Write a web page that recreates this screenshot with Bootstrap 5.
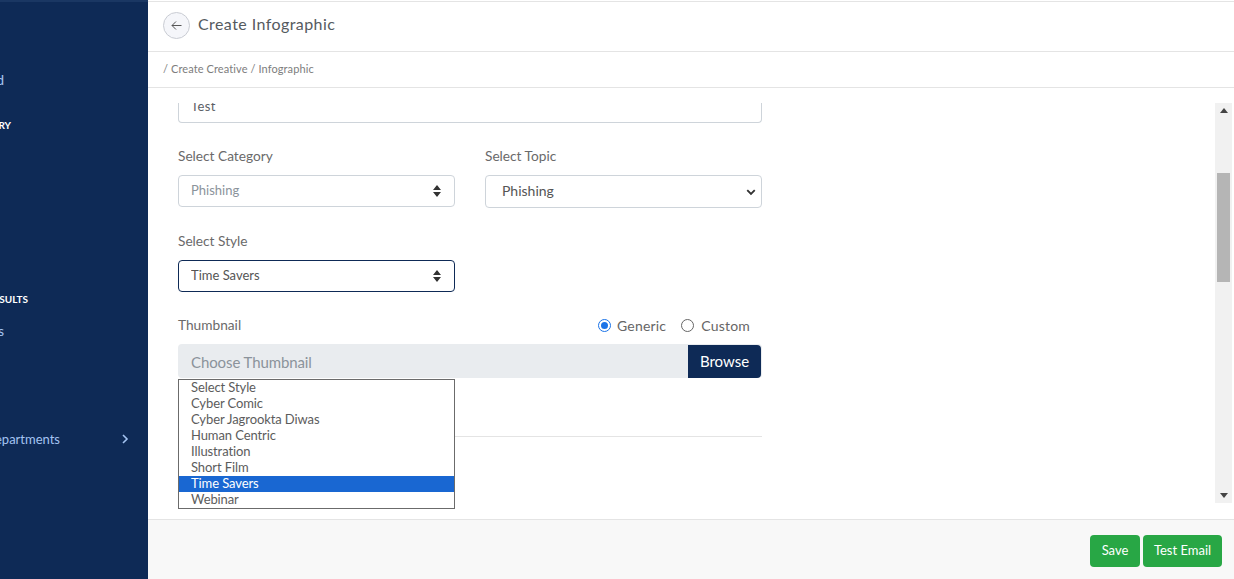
<!DOCTYPE html>
<html lang="en">
<head>
<meta charset="utf-8">
<title>Create Infographic</title>
<link href="https://cdn.jsdelivr.net/npm/bootstrap@5.3.0/dist/css/bootstrap.min.css" rel="stylesheet">
<style>
html,body{height:579px;overflow:hidden}
body{font-family:Lato,"Noto Sans",sans-serif;color:#5b6066;background:#fff;font-size:14px}
.app-shell{width:1234px;height:579px}
.side-panel{width:148px;background:#0e2a56;border-top:2px solid #1a3763;overflow:hidden;flex:none}
.side-row{display:flex;justify-content:flex-end;white-space:nowrap;color:#a4c4f2;font-size:14px;line-height:20px}
.side-head{color:#fff;font-weight:700;font-size:10px;line-height:14px}
.r-dash{width:4px;margin-top:68px}
.r-lib{width:11px;margin-top:28px}
.r-res{width:28px;margin-top:160px}
.r-resu{width:4px;margin-top:15px}
.r-dept{width:60px;margin-top:88px;font-size:13px}
.chev{flex:none;margin-left:60px;margin-top:88px}
.main-panel{min-width:0;position:relative;padding-top:1px}
.top-head{height:51px;border-top:1px solid #e4e4e4;border-bottom:1px solid #e4e4e4;padding:0 15px 2px}
.back-ring{width:27px;height:27px;border:1px solid #c9ccd3;border-radius:50%;background:#f5f6fa;flex:none}
.page-title{font-size:16px;font-weight:400;line-height:20px;color:#555a60;margin:0 0 3px 8px;letter-spacing:.43px}
.crumbs{height:36px;border-bottom:1px solid #e4e4e4;padding:0 15px;font-size:11px;color:#7d7d7d;letter-spacing:.1px}
.work-area{height:431px;padding:15px 2px 16px 0}
.form-clip{overflow:hidden;min-width:0;padding:0 15px 0 30px}
.form-box{width:584px;margin-top:-5px}
.fld{height:25px;border:1px solid #ced4da;border-top:0;border-radius:0 0 4px 4px;padding:1px 12px 0;color:#5b6066;font-size:13px;line-height:14px;letter-spacing:.4px}
.lbl{font-size:13.7px;color:#6a6a6a;line-height:18px;margin-bottom:10px}
.pick{height:32px;padding:0 12px 1px;font-size:13px;color:#555;border-color:#ced4da;border-radius:4px;background-size:10px 14px;background-position:right 12px center;background-repeat:no-repeat;background-image:url("data:image/svg+xml,%3csvg xmlns='http://www.w3.org/2000/svg' viewBox='0 0 10 14'%3e%3cpath fill='%23333' d='M5 1l4 5H1zM5 13L1 8h8z'/%3e%3c/svg%3e");box-shadow:none!important}
.pick-muted{color:#8b939b;background-color:#fff}
.pick-on{border-color:#0e2a56;color:#555}
.pick-topic{height:33px;font-size:14px;padding:0 12px 2px 16px;color:#555;background-size:12px 10px;background-position:right 4px center;background-image:url("data:image/svg+xml,%3csvg xmlns='http://www.w3.org/2000/svg' viewBox='0 0 16 16'%3e%3cpath fill='none' stroke='%23333' stroke-width='3' d='M2 5l6 6 6-6'/%3e%3c/svg%3e")}
.gap-cols{gap:30px}
.gap-cols>div{width:277px}
.mt-a{margin-top:24px}
.mt-b{margin-top:24px}
.thumb-top{margin-top:23px;height:20px}
.radio-txt{font-size:14px;color:#666;letter-spacing:.2px}
.rd{width:13px;height:13px;margin:0 6px 0 0;border:1px solid #666;background:#fff;border-radius:50%;flex:none}
.rd-c{margin-right:7px}
.gen-txt{margin-right:15px}
.rd-on{border:1px solid #1a73e8;padding:2px;background:#1a73e8;background-clip:content-box}
.thumb-group{height:34px;margin-top:9px;border-radius:4px;background:#e9ecef}
.thumb-ph{font-size:15px;color:#8b939b;padding:2px 0 0 13px;flex:1;letter-spacing:-.1px}
.browse-btn{width:73px;height:33px;background:#0e2a56;color:#fff;font-size:15px;border-radius:0 4px 4px 0;border:0;padding:0;margin-right:1px}
.rule-line{height:1px;background:#e4e4e4;margin-top:58px}
.fake-bar{width:17px;background:#f1f1f1;flex:none;height:400px}
.bar-cap{height:15px}
.bar-thumb{height:109px;width:13px;background:#b5b5b5;margin:55px auto 0}
.bar-rest{flex:1}
.tri-up{width:0;height:0;border:4px solid transparent;border-top:0;border-bottom:5px solid #444}
.tri-dn{width:0;height:0;border:4px solid transparent;border-bottom:0;border-top:5px solid #444}
.foot-bar{height:60px;background:#f8f8f8;border-top:1px solid #e4e4e4;padding:15px 12px 12px 0;gap:3px}
.go-btn{height:32px;background:#28a745;color:#fff;font-size:13px;border:0;border-radius:4px;padding:0}
.w-save{width:50px}.w-test{width:79px}
.drop-list{position:absolute;left:30px;top:379px;width:277px;height:130px;background:#fff;border:1px solid #6b6b6b;z-index:5;font-size:13px;color:#5c5c5c;letter-spacing:-.1px}
.drop-item{height:16px;line-height:14px;padding-left:12px}
.drop-sel{background:#1967d2;color:#fff}
</style>
</head>
<body>
<div class="app-shell d-flex">
  <aside class="side-panel">
    <div class="side-row r-dash">Dashboard</div>
    <div class="side-row side-head r-lib">LIBRARY</div>
    <div class="side-row side-head r-res">RESULTS</div>
    <div class="side-row r-resu">Results</div>
    <div class="d-flex align-items-center">
      <div class="side-row r-dept">Departments</div>
      <svg class="chev" width="10" height="12" viewBox="0 0 10 12"><path d="M3 2l4 4-4 4" fill="none" stroke="#a4c4f2" stroke-width="1.6"/></svg>
    </div>
  </aside>
  <main class="main-panel flex-grow-1 d-flex flex-column">
    <header class="top-head d-flex align-items-center">
      <div class="back-ring d-flex align-items-center justify-content-center">
        <svg width="13" height="13" viewBox="0 0 13 13"><path d="M11.5 6.5H2M6 2.5l-4 4 4 4" fill="none" stroke="#555" stroke-width="1"/></svg>
      </div>
      <h1 class="page-title">Create Infographic</h1>
    </header>
    <div class="crumbs d-flex align-items-center">/ Create Creative / Infographic</div>
    <div class="work-area d-flex">
      <div class="form-clip flex-grow-1">
        <div class="form-box">
          <div class="fld">Test</div>
          <div class="d-flex gap-cols mt-a">
            <div>
              <div class="lbl">Select Category</div>
              <select class="form-select pick pick-muted"><option>Phishing</option></select>
            </div>
            <div>
              <div class="lbl">Select Topic</div>
              <select class="form-select pick pick-topic"><option>Phishing</option></select>
            </div>
          </div>
          <div class="mt-b">
            <div class="gap-cols d-flex"><div>
              <div class="lbl">Select Style</div>
              <select class="form-select pick pick-on"><option>Time Savers</option></select>
            </div></div>
          </div>
          <div class="thumb-top d-flex justify-content-between align-items-center">
            <div class="lbl mb-0">Thumbnail</div>
            <div class="d-flex align-items-center radio-txt me-2 pe-1">
              <span class="rd rd-on"></span><span class="gen-txt">Generic</span>
              <span class="rd rd-c"></span><span>Custom</span>
            </div>
          </div>
          <div class="thumb-group d-flex align-items-center">
            <div class="thumb-ph">Choose Thumbnail</div>
            <button class="browse-btn" type="button">Browse</button>
          </div>
          <div class="rule-line"></div>
        </div>
      </div>
      <div class="fake-bar d-flex flex-column">
        <div class="bar-cap d-flex align-items-center justify-content-center"><span class="tri-up"></span></div>
        <div class="bar-thumb"></div>
        <div class="bar-rest"></div>
        <div class="bar-cap d-flex align-items-center justify-content-center"><span class="tri-dn"></span></div>
      </div>
    </div>
    <footer class="foot-bar d-flex justify-content-end align-items-start">
      <button class="go-btn w-save" type="button">Save</button>
      <button class="go-btn w-test" type="button">Test Email</button>
    </footer>
    <div class="drop-list">
      <div class="drop-item">Select Style</div>
      <div class="drop-item">Cyber Comic</div>
      <div class="drop-item">Cyber Jagrookta Diwas</div>
      <div class="drop-item">Human Centric</div>
      <div class="drop-item">Illustration</div>
      <div class="drop-item">Short Film</div>
      <div class="drop-item drop-sel">Time Savers</div>
      <div class="drop-item">Webinar</div>
    </div>
  </main>
</div>
<script src="https://cdn.jsdelivr.net/npm/bootstrap@5.3.0/dist/js/bootstrap.bundle.min.js"></script>
</body>
</html>
